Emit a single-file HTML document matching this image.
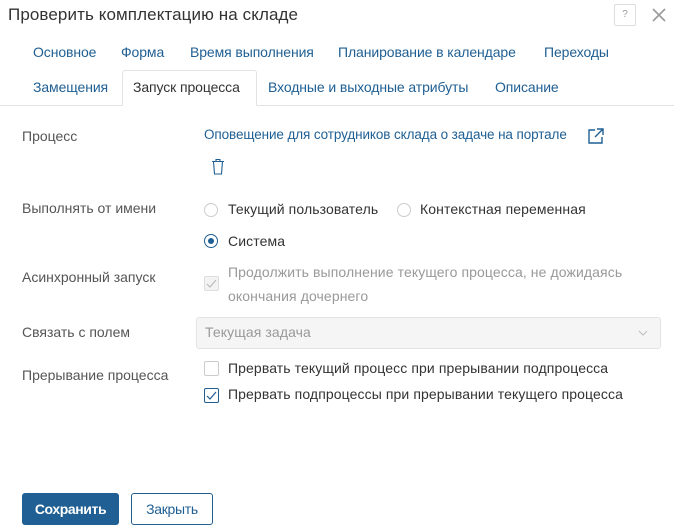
<!DOCTYPE html>
<html><head><meta charset="utf-8"><style>
body{margin:0;width:674px;height:529px;background:#fff;font-family:"Liberation Sans",sans-serif;position:relative;overflow:hidden;color:#333}
.a{position:absolute;white-space:nowrap}
.t{font-size:14px;color:#1f5f93;letter-spacing:-0.1px}
.l{font-size:14px;color:#555;letter-spacing:0}
.v{font-size:14px;color:#333;letter-spacing:0.1px}
.rad{position:absolute;width:14px;height:14px;border:1px solid #ccc;border-radius:50%;box-sizing:border-box}
.cb{position:absolute;width:15px;height:15px;border:1px solid #ccc;border-radius:2px;box-sizing:border-box}
</style></head><body>
<div class="a" style="left:8px;top:5px;font-size:17px;color:#333;letter-spacing:0.1px">Проверить комплектацию на складе</div>
<div class="a" style="left:614px;top:4px;width:22px;height:22px;border:1px solid #ddd;border-radius:2px;box-sizing:border-box;font-size:10px;color:#999;text-align:center;line-height:20px">?</div>
<svg class="a" style="left:651px;top:7px" width="16" height="16"><path d="M2 2L14 14M14 2L2 14" stroke="#999" stroke-width="1.6"/></svg>
<div class="a t" style="left:33px;top:44px">Основное</div>
<div class="a t" style="left:121px;top:44px">Форма</div>
<div class="a t" style="left:190px;top:44px">Время выполнения</div>
<div class="a t" style="left:338px;top:44px">Планирование в календаре</div>
<div class="a t" style="left:544px;top:44px">Переходы</div>
<div class="a" style="left:0;top:105px;width:674px;height:1px;background:#e3e3e3"></div>
<div class="a" style="left:122px;top:70px;width:135px;height:36px;border:1px solid #e3e3e3;border-bottom:1px solid #fff;box-sizing:border-box;background:#fff;border-radius:3px 3px 0 0"></div>
<div class="a t" style="left:33px;top:79px">Замещения</div>
<div class="a v" style="left:133px;top:79px;letter-spacing:-0.1px">Запуск процесса</div>
<div class="a t" style="left:268px;top:79px">Входные и выходные атрибуты</div>
<div class="a t" style="left:495px;top:79px">Описание</div>

<div class="a l" style="left:22px;top:128px">Процесс</div>
<div class="a t" style="left:204px;top:127px;font-size:13.5px;letter-spacing:-0.1px">Оповещение для сотрудников склада о задаче на портале</div>
<svg class="a" style="left:587px;top:127px" width="18" height="18"><path d="M8 3H2V16H15V10M10 2H16V8M16 2L8 10" fill="none" stroke="#1f5f93" stroke-width="1.4"/></svg>
<svg class="a" style="left:210px;top:158px" width="16" height="18"><path d="M2 3.5H14M6 3.5V1.5H10V3.5M3.5 3.5L4.5 16H11.5L12.5 3.5" fill="none" stroke="#1f5f93" stroke-width="1.1"/></svg>

<div class="a l" style="left:22px;top:200px">Выполнять от имени</div>
<div class="rad" style="left:204px;top:203px"></div>
<div class="a v" style="left:228px;top:201px">Текущий пользователь</div>
<div class="rad" style="left:397px;top:203px"></div>
<div class="a v" style="left:420px;top:201px">Контекстная переменная</div>
<div class="rad" style="left:204px;top:234px;border-color:#1f5f93"><div style="position:absolute;left:3px;top:3px;width:6px;height:6px;border-radius:50%;background:#1f5f93"></div></div>
<div class="a v" style="left:228px;top:233px">Система</div>

<div class="a l" style="left:22px;top:269px">Асинхронный запуск</div>
<div class="cb" style="left:204px;top:276px;background:#f3f3f3;border-color:#ddd"><svg width="13" height="13" style="position:absolute;left:0;top:0"><path d="M2 7L5 10L11 3" fill="none" stroke="#bbb" stroke-width="1.2"/></svg></div>
<div class="a v" style="left:228px;top:264px;color:#999">Продолжить выполнение текущего процесса, не дожидаясь</div>
<div class="a v" style="left:228px;top:288px;color:#999">окончания дочернего</div>

<div class="a l" style="left:22px;top:324px">Связать с полем</div>
<div class="a" style="left:196px;top:317px;width:465px;height:32px;border:1px solid #e3e3e3;border-radius:3px;background:#f5f5f5;box-sizing:border-box"></div>
<div class="a v" style="left:205px;top:324px;color:#999">Текущая задача</div>
<svg class="a" style="left:638px;top:329px" width="10" height="8"><path d="M1 2L5 6L9 2" fill="none" stroke="#bbb" stroke-width="1"/></svg>

<div class="a l" style="left:22px;top:367px">Прерывание процесса</div>
<div class="cb" style="left:204px;top:361px"></div>
<div class="a v" style="left:228px;top:360px">Прервать текущий процесс при прерывании подпроцесса</div>
<div class="cb" style="left:204px;top:388px;border-color:#1f5f93"><svg width="13" height="13" style="position:absolute;left:0;top:0"><path d="M2 7L5 10L11 3" fill="none" stroke="#1f5f93" stroke-width="1.2"/></svg></div>
<div class="a v" style="left:228px;top:386px">Прервать подпроцессы при прерывании текущего процесса</div>

<div class="a" style="left:22px;top:493px;width:97px;height:32px;background:#1f5f93;border-radius:3px;color:#fff;font-size:14px;font-weight:bold;text-align:center;line-height:32px;letter-spacing:-0.4px">Сохранить</div>
<div class="a" style="left:131px;top:493px;width:82px;height:32px;border:1px solid #1f5f93;box-sizing:border-box;border-radius:3px;color:#1f5f93;font-size:14px;text-align:center;line-height:30px;letter-spacing:-0.3px">Закрыть</div>
</body></html>
